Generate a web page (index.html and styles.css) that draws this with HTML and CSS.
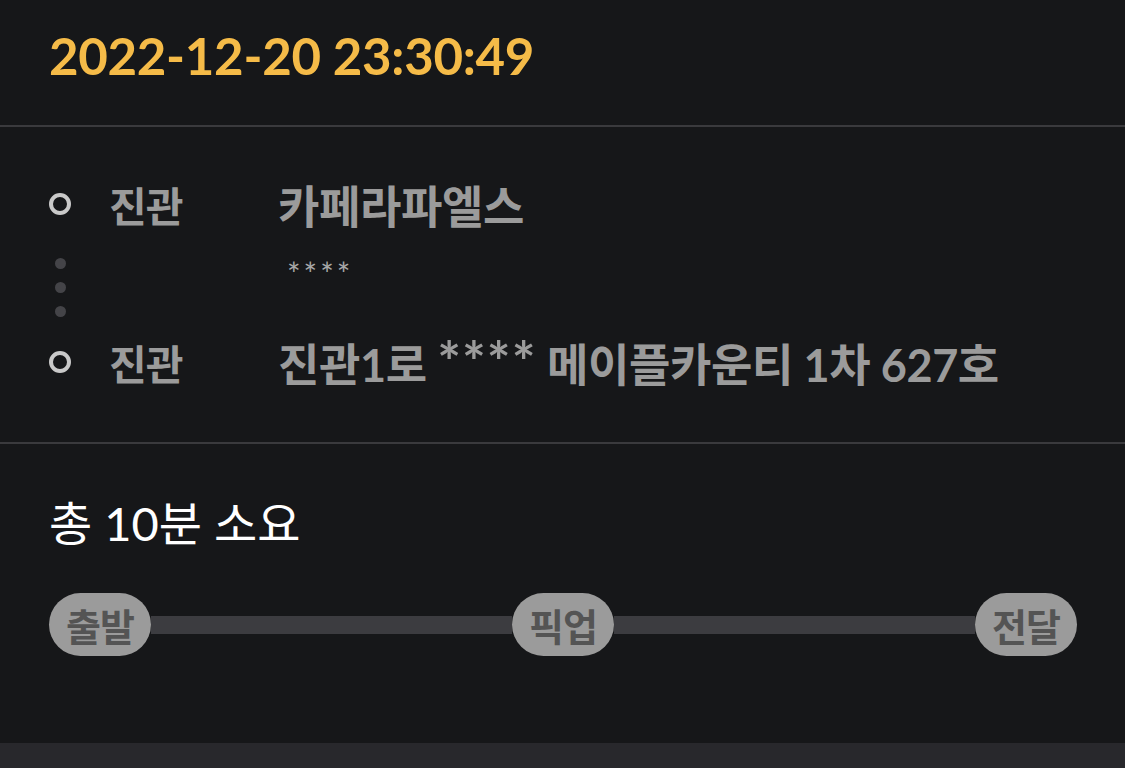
FILE: index.html
```html
<!DOCTYPE html>
<html lang="ko">
<head>
  <meta charset="UTF-8" />
  <meta name="viewport" content="width=device-width, initial-scale=1" />
  <title>배달 상세</title>
  <link rel="stylesheet" href="styles.css">
</head>
<body>

<header class="date-head">
  <h1>2022-12-20 23:30:49</h1>
</header>

<section class="route">
  <div class="route-row">
    <span class="ring"></span>
    <span class="area">진관</span>
    <span class="place">카페라파엘스</span>
  </div>
  <div class="route-mid">
    <div class="dots">
      <span></span><span></span><span></span>
    </div>
    <span class="detail">****</span>
  </div>
  <div class="route-row">
    <span class="ring"></span>
    <span class="area">진관</span>
    <span class="place">진관1로 <span class="mask">****</span> 메이플카운티 1차 627호</span>
  </div>
</section>

<section class="summary">
  <p class="total">총 10분 소요</p>
  <div class="timeline">
    <span class="step">출발</span>
    <span class="track"></span>
    <span class="step">픽업</span>
    <span class="track"></span>
    <span class="step">전달</span>
  </div>
</section>

<div class="bottom-bar"></div>

</body>
</html>
```

FILE: styles.css
```css
body {
  margin: 0;
  background: #161719;
  color: #fff;
  font-family: Lato, "Noto Sans CJK KR", sans-serif;
}

.date-head {
  height: 125px;
  display: flex;
  align-items: center;
  padding: 0 49px;
  border-bottom: 2px solid #3a3a3d;
}
.date-head h1 {
  margin: 0 0 14px;
  font-size: 51px;
  font-weight: 700;
  color: #f5bb48;
  letter-spacing: -0.3px;
}

.route {
  padding: 52px 49px 55px;
  border-bottom: 2px solid #3a3a3d;
}
.route-row {
  display: flex;
  align-items: center;
  height: 50px;
}
.ring {
  width: 14px;
  height: 14px;
  border: 4px solid #c9c9c9;
  border-radius: 50%;
  flex: none;
}
.area {
  margin-left: 38px;
  width: 169px;
  flex: none;
  font-size: 41px;
  font-weight: 700;
  color: #9b9b9b;
  letter-spacing: -1px;
}
.place {
  font-size: 45px;
  font-weight: 700;
  color: #9b9b9b;
  white-space: nowrap;
  letter-spacing: -0.4px;
}
.mask {
  font-size: 56px;
  line-height: 0;
  letter-spacing: 1px;
}
.route-mid {
  display: flex;
  align-items: flex-start;
  padding: 29px 0 20px;
}
.dots {
  width: 22px;
  display: flex;
  flex-direction: column;
  align-items: center;
  gap: 13px;
  flex: none;
}
.dots span {
  width: 11px;
  height: 11px;
  border-radius: 50%;
  background: #444448;
}
.detail {
  margin-left: 216px;
  margin-top: 2px;
  font-size: 32px;
  line-height: 28px;
  color: #a8a8a8;
  letter-spacing: 3px;
}

.summary {
  padding: 55px 48px 87px 49px;
}
.total {
  margin: 0;
  font-size: 47px;
  line-height: 48px;
  color: #fff;
  letter-spacing: 0;
}
.timeline {
  display: flex;
  align-items: center;
  margin-top: 46px;
}
.step {
  width: 102px;
  height: 63px;
  border-radius: 32px;
  background: #9b9b9b;
  color: #545454;
  font-size: 38px;
  font-weight: 700;
  display: flex;
  align-items: center;
  justify-content: center;
  flex: none;
  letter-spacing: -1px;
}
.track {
  flex: 1;
  height: 18px;
  background: #3c3c40;
}

.bottom-bar {
  height: 40px;
  background: #28282c;
}
```
